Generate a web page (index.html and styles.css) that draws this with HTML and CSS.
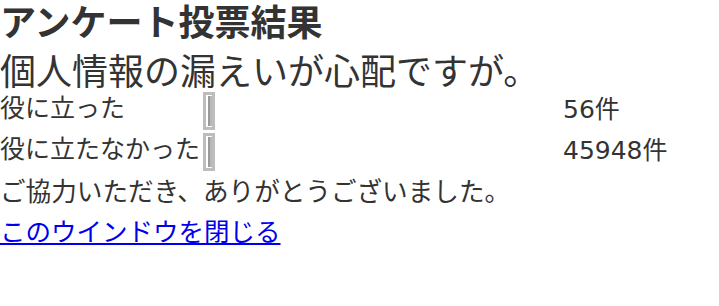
FILE: index.html
```html
<!DOCTYPE html>
<html lang="ja">
<head>
<meta charset="utf-8">
<title>アンケート投票結果</title>
<link rel="stylesheet" href="styles.css">
</head>
<body>
<h1 class="title">アンケート投票結果</h1>
<p class="question">個人情報の漏えいが心配ですが。</p>
<div class="results">
  <div class="label">役に立った</div>
  <div class="bar-cell"><div class="bar"><div class="bar-fill"></div></div></div>
  <div class="count">56件</div>
  <div class="label">役に立たなかった</div>
  <div class="bar-cell"><div class="bar"><div class="bar-fill"></div></div></div>
  <div class="count">45948件</div>
</div>
<p class="thanks">ご協力いただき、ありがとうございました。</p>
<p class="close"><a href="#" class="close-link">このウインドウを閉じる</a></p>
</body>
</html>
```
FILE: styles.css
```css
html, body {
  margin: 0;
  padding: 0;
  background: #fff;
}
body {
  font-family: "Noto Sans CJK JP", "Noto Sans", sans-serif;
  color: #333;
  width: 719px;
  height: 306px;
  overflow: hidden;
}
.title {
  margin: 0;
  font-size: 36px;
  font-weight: bold;
  line-height: 40px;
}
.question {
  margin: 6px 0 0;
  font-size: 36px;
  line-height: 46px;
}
.results {
  display: grid;
  grid-template-columns: 203px 360px auto;
  grid-auto-rows: 41px;
  font-size: 25px;
  line-height: 29px;
}
.label {
  white-space: nowrap;
}
.bar-cell {
  display: flex;
  align-items: flex-start;
}
.bar {
  box-sizing: border-box;
  width: 12px;
  height: 38px;
  border: 3px solid #bdbdbd;
  background: #fff;
  display: flex;
  padding: 1px 0 1px 2px;
}
.bar-fill {
  width: 4px;
  background: linear-gradient(to right, #9a9a9a 0, #9a9a9a 2px, #b8b8b8 2px, #b8b8b8 4px);
}
.count {
  font-family: "DejaVu Sans", "Noto Sans CJK JP", sans-serif;
  padding-top: 3px;
  white-space: nowrap;
}
.thanks {
  margin: 0;
  font-size: 25.6px;
  line-height: 31px;
}
.close {
  margin: 9px 0 0;
  font-size: 25.5px;
  line-height: 31px;
}
.close-link {
  color: #0000ee;
}
```
